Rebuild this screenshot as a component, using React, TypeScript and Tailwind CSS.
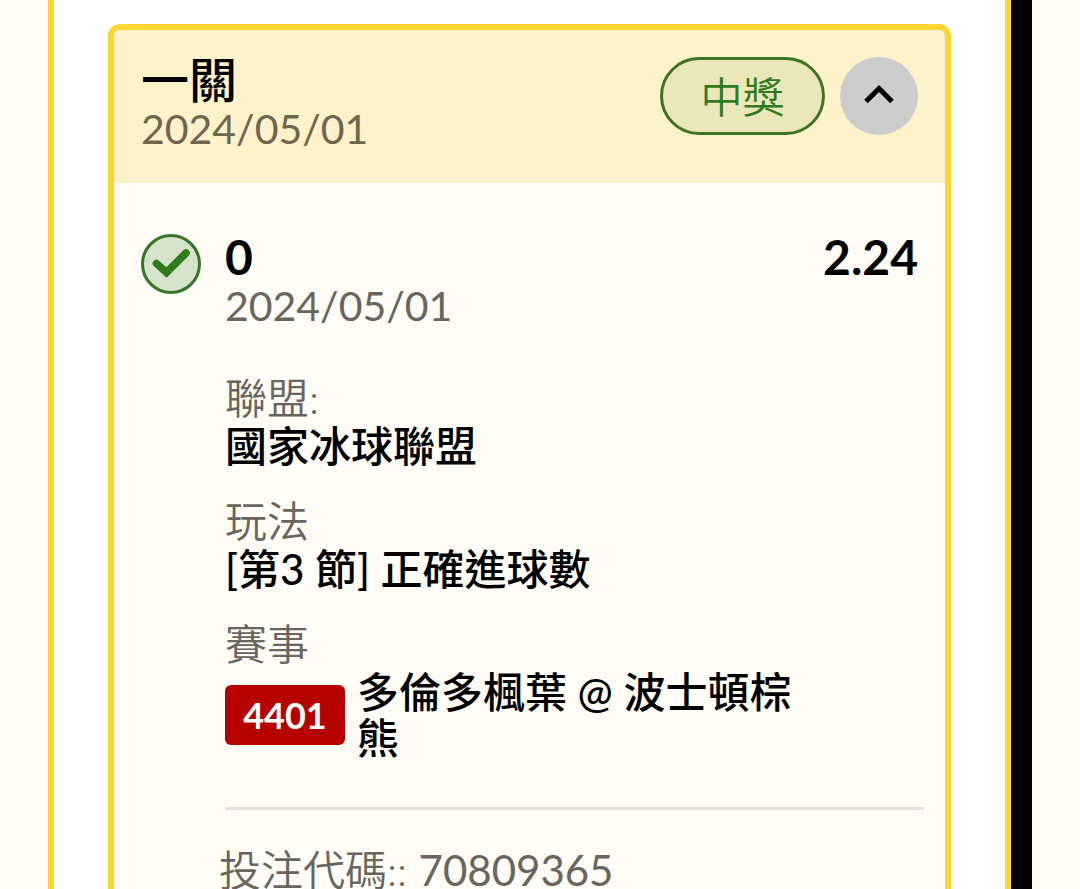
interface Detail {
    label: string;
    value: string;
}

const details: Detail[] = [
    { label: "聯盟:", value: "國家冰球聯盟" },
    { label: "玩法", value: "[第3 節] 正確進球數" },
];

function CheckBadge() {
    return (
        <svg viewBox="0 0 60 60" className="w-[60px] h-[60px] shrink-0" aria-hidden="true">
            <circle cx="30" cy="30" r="28.5" fill="#d7e3ca" stroke="#37762a" strokeWidth="3" />
            <path d="M15.5 29.5 L25.5 38.5 L45 19" fill="none" stroke="#2f7a1d" strokeWidth="7.6" strokeLinecap="round" strokeLinejoin="miter" />
        </svg>
    );
}

function Chevron() {
    return (
        <svg viewBox="0 0 32 24" className="w-8 h-6" fill="none" aria-hidden="true">
            <path d="M3 17.5 L16 4.5 L29 17.5" stroke="#000" strokeWidth="5" />
        </svg>
    );
}

function BetHeader() {
    return (
        <header className="flex items-start justify-between bg-[#fef2cb] px-[27px] pt-[27px] pb-7">
            <div>
                <h2 className="text-5xl leading-[46px] font-medium">一關</h2>
                <div className="text-[41px] leading-[52px] text-[#6e664e]">2024/05/01</div>
            </div>
            <div className="flex gap-[15px]">
                <span className="flex h-[78px] w-[165px] items-center justify-center rounded-full border-3 border-[#3a7424] bg-[#ebe7b9] pt-0.5 text-[42px] leading-[48px] font-[350] text-[#2f7a1d]">
                    中獎
                </span>
                <button
                    type="button"
                    aria-label="收合"
                    className="flex h-[78px] w-[78px] items-center justify-center rounded-full bg-[#cecdce]"
                >
                    <Chevron />
                </button>
            </div>
        </header>
    );
}

export default function App() {
    return (
        <main
            lang="zh-Hant"
            className="flex min-h-screen bg-[#fffdf5] pl-12 pr-12 text-black font-[Lato,'Noto_Sans_CJK_TC',sans-serif]"
        >
            <div className="flex-1 border-x-6 border-[#fbd62f] bg-white px-[54px] pt-6">
                <article className="overflow-hidden rounded-t-xl border-6 border-b-0 border-[#fbd62f] bg-[#fffdf5]">
                    <BetHeader />
                    <section className="flex gap-6 px-[27px] pt-[51px]">
                        <CheckBadge />
                        <div className="flex-1">
                            <h3 className="text-5xl leading-[46px] font-bold">0</h3>
                            <div className="text-[41px] leading-[52px] text-[#6a655e]">2024/05/01</div>
                            <dl className="mt-[42px]">
                                {details.map((d) => (
                                    <div key={d.label} className="mb-[27px]">
                                        <dt className="text-[42px] leading-[48px] font-[350] text-[#6a655e]">{d.label}</dt>
                                        <dd className="text-[42px] leading-[48px] font-medium">{d.value}</dd>
                                    </div>
                                ))}
                                <div>
                                    <dt className="text-[42px] leading-[48px] font-[350] text-[#6a655e]">賽事</dt>
                                    <dd className="mt-px flex items-center gap-3">
                                        <span className="flex h-[60px] w-[120px] shrink-0 items-center justify-center rounded-md bg-[#b70000] text-4xl font-bold text-white">
                                            4401
                                        </span>
                                        <span className="text-[42px] leading-[46px] font-medium">
                                            多倫多楓葉 @ 波士頓棕熊
                                        </span>
                                    </dd>
                                </div>
                            </dl>
                        </div>
                        <div className="text-5xl leading-[46px] font-bold">2.24</div>
                    </section>
                    <footer className="mt-[46px] pl-[105px] pr-[21px]">
                        <hr className="ml-1.5 border-t-3 border-[#e6e2da]" />
                        <div className="pt-9 text-[42px] leading-[48px] font-[350] text-[#6a655e]">
                            投注代碼:: <span className="font-normal">70809365</span>
                        </div>
                    </footer>
                </article>
            </div>
            <div className="w-[21px] bg-black" />
        </main>
    );
}
